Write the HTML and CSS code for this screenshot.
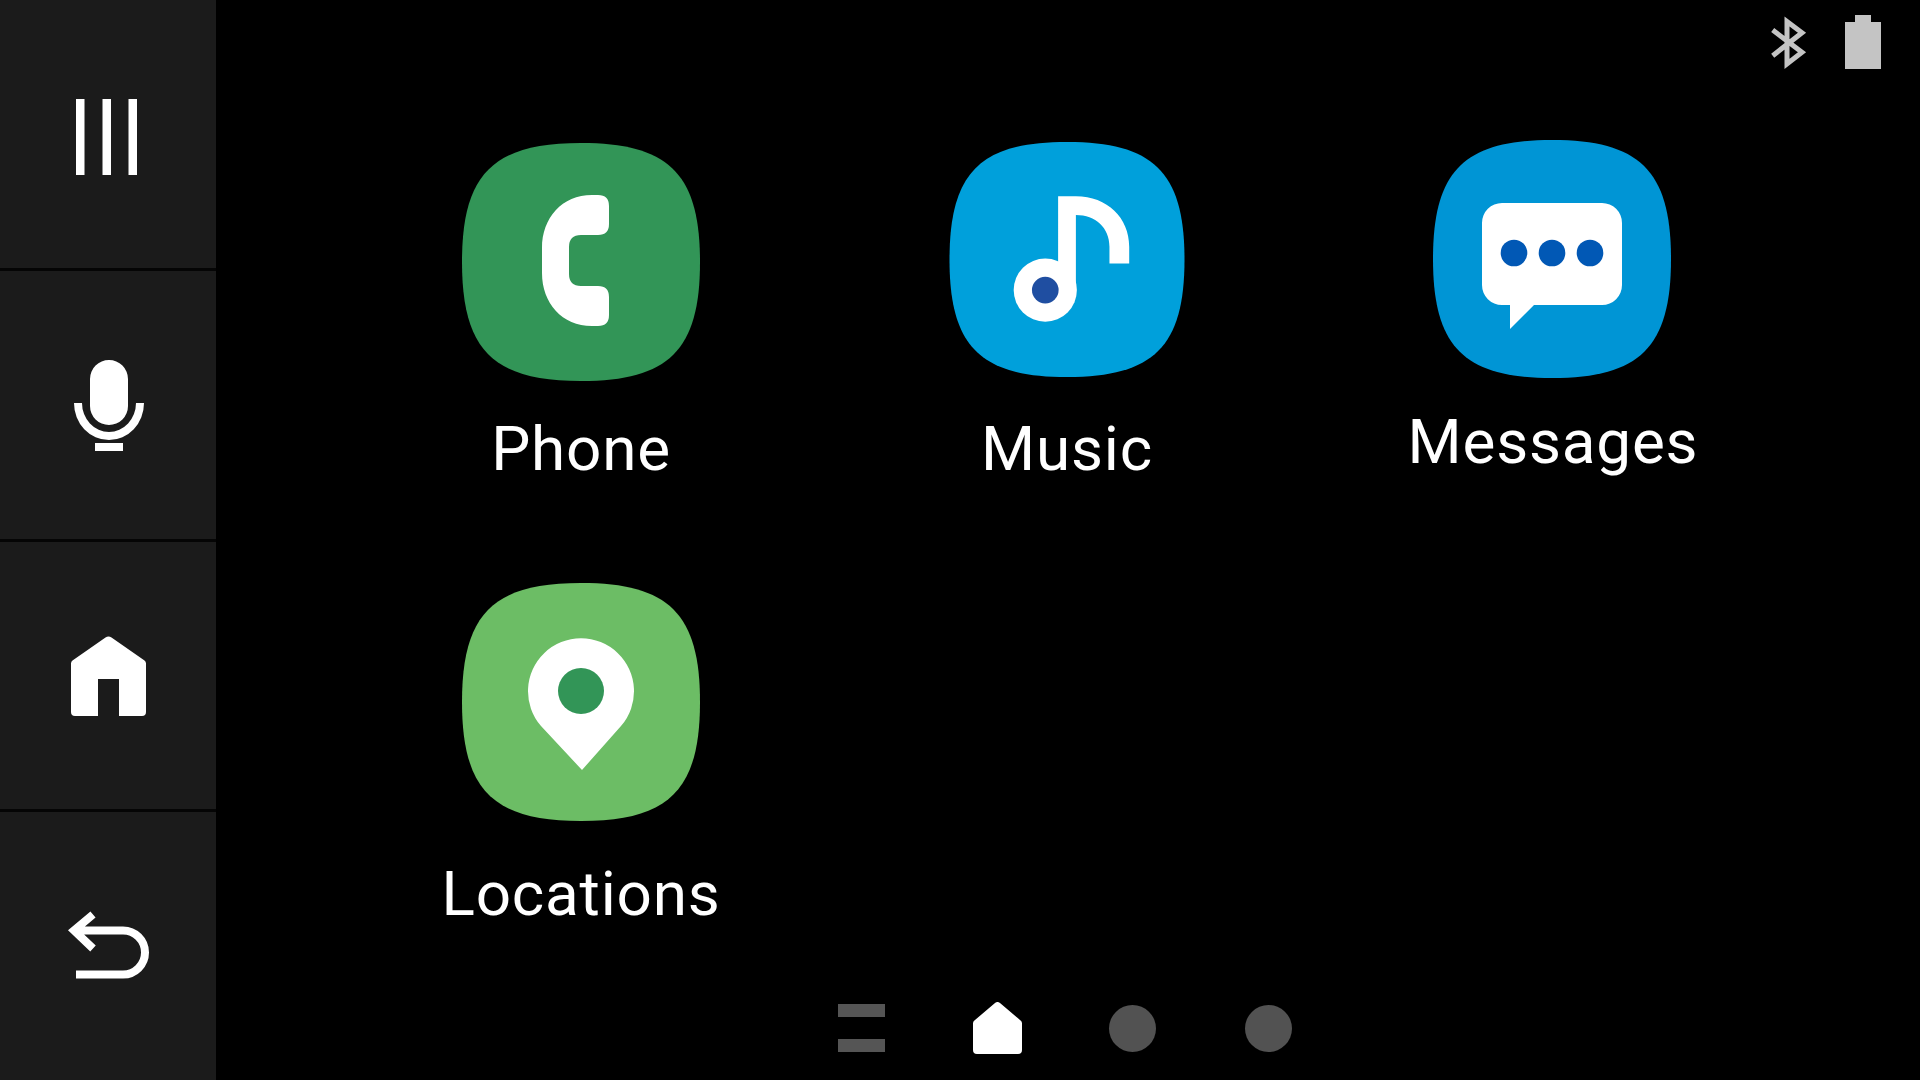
FILE: index.html
```html
<!DOCTYPE html>
<html lang="en">
<head>
<meta charset="utf-8">
<title>Car launcher</title>
<link rel="stylesheet" href="styles.css">
</head>
<body>
<div class="screen">
  <nav class="rail">
    <div class="rail-btn">
      <svg class="rail-icon" viewBox="0 0 216 270"><path class="w" d="M76 99h8.500v76H76zM102.500 99h8.500v76h-8.500zM128.500 99h8.500v76h-8.500z"/></svg>
    </div>
    <div class="rail-btn">
      <svg class="rail-icon" viewBox="0 0 216 270"><path class="w" d="M109 89h0a19 19 0 0 1 19 19v27a19 19 0 0 1-19 19h0a19 19 0 0 1-19-19v-27a19 19 0 0 1 19-19zM74 132a35 37 0 0 0 70 0h-8a27 29 0 0 1-54 0zM95 172h28v8H95z"/></svg>
    </div>
    <div class="rail-btn">
      <svg class="rail-icon" viewBox="0 0 216 270"><path class="w" d="M105.500 95.500a5 5 0 0 1 6 0l33 23a4 4 0 0 1 1.500 3V170a4 4 0 0 1-4 4h-23v-37H98v37H75a4 4 0 0 1-4-4v-48.500a4 4 0 0 1 1.500-3z"/></svg>
    </div>
    <div class="rail-btn">
      <svg class="rail-icon" viewBox="0 0 216 270"><path class="back" d="M74 118.500h49a22 22 0 0 1 0 44H76M93 102.500 74 118.500l19 18"/></svg>
    </div>
  </nav>
  <main class="main">
    <div class="status">
      <svg class="bt" viewBox="0 0 35 52"><path d="M1.700 14 31 36.300 16 48V5.500L31 16.700 1.700 39.700"/></svg>
      <svg class="battery" viewBox="0 0 36 54"><path d="M10 0h16v7h10v47H0V7h10z"/></svg>
    </div>
    <div class="grid">
      <div class="tile tile-a">
        <svg class="app" viewBox="0 0 238 238">
          <path class="phone-bg" d="M119 0C207 0 238 31 238 119S207 238 119 238 0 207 0 119 31 0 119 0Z"/>
          <path class="w" d="M136 52Q147 52 147 63V81Q147 92 136 92H119Q107 92 107 104V131Q107 143 119 143H136Q147 143 147 154V172Q147 183 136 183H130C100 183 80 160 80 130V105C80 75 100 52 130 52Z"/>
        </svg>
        <div class="label">Phone</div>
      </div>
      <div class="tile tile-b">
        <svg class="app app-small" viewBox="0 0 238 238">
          <path class="music-bg" d="M119 0C207 0 238 31 238 119S207 238 119 238 0 207 0 119 31 0 119 0Z"/>
          <path class="w" d="M110 55H128C160 55 182 77 182 106V123H162V106C162 87 148 74 128 74V150H110Z"/>
          <circle class="w" cx="97" cy="150" r="32"/>
          <circle class="music-dot" cx="97" cy="150" r="13.500"/>
        </svg>
        <div class="label">Music</div>
      </div>
      <div class="tile tile-c">
        <svg class="app" viewBox="0 0 238 238">
          <path class="msg-bg" d="M119 0C207 0 238 31 238 119S207 238 119 238 0 207 0 119 31 0 119 0Z"/>
          <path class="w" d="M69 63H169A20 20 0 0 1 189 83V145A20 20 0 0 1 169 165H101L77 189V165H69A20 20 0 0 1 49 145V83A20 20 0 0 1 69 63Z"/>
          <circle class="msg-dot" cx="81" cy="113" r="13.300"/>
          <circle class="msg-dot" cx="119" cy="113" r="13.300"/>
          <circle class="msg-dot" cx="157" cy="113" r="13.300"/>
        </svg>
        <div class="label">Messages</div>
      </div>
      <div class="tile tile-d">
        <svg class="app" viewBox="0 0 238 238">
          <path class="loc-bg" d="M119 0C207 0 238 31 238 119S207 238 119 238 0 207 0 119 31 0 119 0Z"/>
          <path class="w" d="M120 187 79 143A53 53 0 1 1 159 143Z"/>
          <circle class="loc-dot" cx="119" cy="108" r="23"/>
        </svg>
        <div class="label">Locations</div>
      </div>
    </div>
    <div class="dock">
      <div class="dock-item"><svg class="dock-lines" viewBox="0 0 47 48"><path d="M0 0h47v13H0zM0 35h47v13H0z"/></svg></div>
      <div class="dock-item"><svg class="dock-home" viewBox="0 0 49 52"><path d="M22 1a4 4 0 0 1 5 0l20 17a4 4 0 0 1 2 3V48a4 4 0 0 1-4 4H4a4 4 0 0 1-4-4V21a4 4 0 0 1 2-3z"/></svg></div>
      <div class="dock-item"><span class="dock-dot"></span></div>
      <div class="dock-item"><span class="dock-dot"></span></div>
    </div>
  </main>
</div>
</body>
</html>
```
FILE: styles.css
```css
html, body {
  margin: 0;
  height: 100%;
  background: #000;
  overflow: hidden;
}
.screen {
  display: flex;
  width: 1920px;
  height: 1080px;
  font-family: Roboto, "Liberation Sans", sans-serif;
  color: #fff;
}
.rail {
  width: 216px;
  flex: none;
  display: grid;
  grid-template-rows: 268px 268px 267px 1fr;
  gap: 3px;
  background: #050505;
}
.rail-btn {
  background: #1b1b1b;
  min-height: 0;
  overflow: hidden;
}
.rail-icon {
  display: block;
  width: 216px;
  height: 270px;
}
.w { fill: #fff; }
.back {
  fill: none;
  stroke: #fff;
  stroke-width: 8;
}
.main {
  flex: 1;
  min-width: 0;
  display: flex;
  flex-direction: column;
}
.status {
  display: flex;
  justify-content: flex-end;
  align-items: flex-start;
  gap: 39px;
  height: 54px;
  padding: 15px 39px 0 0;
}
.bt {
  width: 35px;
  height: 52px;
  margin-top: 1px;
  overflow: visible;
}
.bt path {
  fill: none;
  stroke: #c4c4c4;
  stroke-width: 5;
}
.battery {
  width: 36px;
  height: 54px;
}
.battery path { fill: #c4c4c4; }
.grid {
  display: grid;
  grid-template-columns: repeat(3, 486px);
  grid-template-rows: 441px auto;
  padding: 71px 0 0 122px;
}
.tile {
  display: flex;
  flex-direction: column;
  align-items: center;
}
.tile-a { padding-top: 3px; }
.tile-b { padding-top: 2px; }
.tile-c { padding-right: 2px; }
.tile-d { padding-top: 2px; }
.app {
  display: block;
  width: 238px;
  height: 238px;
  flex: none;
}
.app-small {
  width: 236px;
  height: 235px;
}
.label {
  font-size: 62px;
  line-height: 70px;
  letter-spacing: 0.8px;
  white-space: nowrap;
}
.tile-a .label { margin-top: 33px; }
.tile-b .label { margin-top: 37px; }
.tile-c .label { margin-top: 29px; }
.tile-d .label { margin-top: 38px; }
.tile-c .label { margin-right: -2px; }
.phone-bg { fill: #329557; }
.music-bg { fill: #00a0db; }
.music-dot { fill: #1f4ea1; }
.msg-bg { fill: #0095d5; }
.msg-dot { fill: #0158b5; }
.loc-bg { fill: #6cbd65; }
.loc-dot { fill: #329557; }
.dock {
  margin-top: auto;
  display: flex;
  justify-content: center;
  align-items: center;
  height: 52px;
  padding: 0 5px 26px 0;
}
.dock-item {
  width: 136px;
  display: flex;
  justify-content: center;
  align-items: center;
}
.dock-lines {
  width: 47px;
  height: 48px;
}
.dock-lines path { fill: #555; }
.dock-home {
  width: 49px;
  height: 52px;
}
.dock-home path { fill: #fff; }
.dock-dot {
  width: 47px;
  height: 47px;
  margin-right: 2px;
  border-radius: 50%;
  background: #525252;
}
```
